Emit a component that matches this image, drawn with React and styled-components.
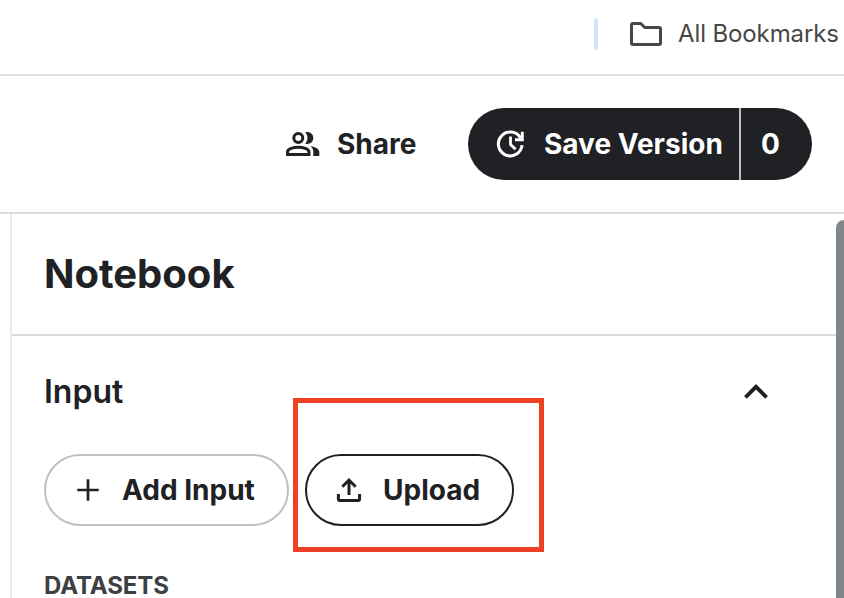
import React from "react";
import styled, { createGlobalStyle } from "styled-components";

const GlobalStyle = createGlobalStyle`
  *, *::before, *::after { box-sizing: border-box; }
  body { margin: 0; background: #fff; overflow: hidden; }
`;

const ink = "#202124";

const Page = styled.div`
  display: flex;
  flex-direction: column;
  width: 844px;
  height: 598px;
  overflow: hidden;
  background: #fff;
  color: ${ink};
  font-family: Inter, sans-serif;
`;

const BookmarksBar = styled.div`
  display: flex;
  align-items: center;
  flex: none;
  height: 76px;
  padding: 0 0 6px 594px;
  border-bottom: 2px solid #e0e0e0;
`;

const BarSeparator = styled.span`
  flex: none;
  width: 4px;
  height: 32px;
  border-radius: 2px;
  background: #d3e2fd;
  margin-right: 32px;
`;

const Header = styled.header`
  display: flex;
  align-items: center;
  flex: none;
  height: 138px;
  padding-left: 286px;
  border-bottom: 2px solid #dadce0;
`;

const Label = styled.span`
  display: block;
  white-space: nowrap;
  font-size: ${(p) => p.$size || 28}px;
  font-weight: ${(p) => p.$weight || 700};
  letter-spacing: ${(p) => p.$spacing || 0}px;
  line-height: ${(p) => p.$line || 36}px;
  color: ${(p) => p.$color || "inherit"};
  margin: 0 0 0 ${(p) => p.$gap || 0}px;
`;

const ShareButton = styled.button`
  display: flex;
  align-items: center;
  flex: none;
  width: 182px;
  height: 72px;
  padding: 0;
  border: 0;
  background: none;
  color: inherit;
  font-family: inherit;
`;

const SplitButton = styled.div`
  display: flex;
  flex: none;
  width: 344px;
  height: 72px;
  border-radius: 36px;
  overflow: hidden;
  background: ${ink};
  color: #fff;
`;

const SplitPart = styled.button`
  display: flex;
  align-items: center;
  flex: none;
  width: ${(p) => p.$width}px;
  padding: 0 0 0 ${(p) => p.$inset}px;
  border: 0;
  border-right: ${(p) => (p.$divided ? "2px solid #bdc1c6" : "0")};
  background: transparent;
  color: inherit;
  font-family: inherit;
`;

const Body = styled.div`
  display: flex;
  flex: 1;
  padding-left: 10px;
`;

const Panel = styled.aside`
  flex: none;
  width: 826px;
  border-left: 2px solid #e8eaed;
`;

const PanelTitle = styled.div`
  display: flex;
  align-items: center;
  height: 122px;
  padding-left: 32px;
  border-bottom: 2px solid #dadce0;
`;

const Section = styled.section`
  padding-left: 32px;
`;

const SectionHeader = styled.div`
  display: flex;
  align-items: center;
  justify-content: space-between;
  height: 118px;
  padding: 0 67px 6px 0;
`;

const Actions = styled.div`
  display: flex;
  gap: 16px;
  height: 72px;
`;

const PillButton = styled.button`
  display: flex;
  align-items: center;
  flex: none;
  width: ${(p) => p.$width}px;
  height: 72px;
  padding: 0 0 0 ${(p) => p.$inset}px;
  border: 2px solid ${(p) => p.$edge};
  border-radius: 36px;
  background: #fff;
  color: ${ink};
  font-family: inherit;
`;

const UploadSlot = styled.div`
  position: relative;
`;

const Highlight = styled.div`
  position: absolute;
  left: -12px;
  top: -56px;
  width: 251px;
  height: 154px;
  border: 5px solid #ee4023;
  pointer-events: none;
`;

const GroupHeading = styled.div`
  padding-top: 48px;
`;

const ScrollThumb = styled.div`
  flex: none;
  width: 8px;
  margin-top: 6px;
  border-radius: 8px 0 0 0;
  background: #80868b;
`;

const Icon = styled.svg`
  display: block;
  flex: none;
  overflow: visible;
`;

const FolderIcon = () => (
  <Icon width="32" height="24" viewBox="0 0 32 24" fill="none" stroke="#474747" strokeWidth="3" strokeLinejoin="round">
    <path d="M3 1.5H10.8L14.8 5.5H29Q30.5 5.5 30.5 7V21Q30.5 22.5 29 22.5H3Q1.5 22.5 1.5 21V3Q1.5 1.5 3 1.5Z" />
  </Icon>
);

const PeopleIcon = () => (
  <Icon width="34" height="24" viewBox="0 0 34 24" fill={ink}>
    <circle cx="12.3" cy="6" r="4.5" fill="none" stroke={ink} strokeWidth="3" />
    <path d="M1.5 22.5V20C1.5 17 7.5 15.2 12.3 15.2S23 17 23 20V22.5Z" fill="none" stroke={ink} strokeWidth="3" />
    <path d="M19.3 .3C23.5-.8 27.3 2 27.3 6S23.5 12.7 19.3 11.7C22.2 8.3 22.2 3.7 19.3 .3Z" />
    <path d="M24.5 14.2C29.5 14.8 33.3 17 33.3 20V24H27.3V20C27.3 17.5 26.3 15.7 24.5 14.2Z" />
  </Icon>
);

const VersionIcon = () => (
  <Icon width="28" height="28" viewBox="0 0 28 28" fill="none" stroke="#fff" strokeWidth="3">
    <path d="M25.1 15.2A11.9 11.9 0 1 1 23.6 8" />
    <path d="M25.3 1.8V9.7H18" strokeWidth="2.9" />
    <path d="M13.5 6.4V14.6L18.6 19.2" strokeWidth="2.8" />
  </Icon>
);

const PlusIcon = () => (
  <Icon width="22" height="22" viewBox="0 0 22 22" fill="none" stroke={ink} strokeWidth="2.7">
    <path d="M11 .3V21.7M.3 11H21.7" />
  </Icon>
);

const UploadIcon = () => (
  <Icon width="26" height="26" viewBox="0 0 26 26" fill="none" stroke={ink} strokeWidth="3">
    <path d="M13 18V3.5M6.3 9.7L13 3L19.7 9.7" />
    <path d="M2.4 17V22Q2.4 23.4 3.8 23.4H22.2Q23.6 23.4 23.6 22V17" />
  </Icon>
);

const ChevronIcon = () => (
  <Icon width="26" height="16" viewBox="0 0 26 16" fill="none" stroke={ink} strokeWidth="3.8">
    <path d="M2.4 13.4L13 2.8L23.6 13.4" />
  </Icon>
);

export default function App() {
  return (
    <Page>
      <GlobalStyle />
      <BookmarksBar>
        <BarSeparator />
        <FolderIcon />
        <Label $size={24} $weight={400} $gap={16} $spacing={-0.12} $color="#474747">All Bookmarks</Label>
      </BookmarksBar>
      <Header>
        <ShareButton>
          <PeopleIcon />
          <Label $gap={17}>Share</Label>
        </ShareButton>
        <SplitButton>
          <SplitPart $width={273} $inset={29} $divided>
            <VersionIcon />
            <Label $gap={19}>Save Version</Label>
          </SplitPart>
          <SplitPart $width={71} $inset={20}>
            <Label>0</Label>
          </SplitPart>
        </SplitButton>
      </Header>
      <Body>
        <Panel>
          <PanelTitle>
            <Label as="h1" $size={40}>Notebook</Label>
          </PanelTitle>
          <Section>
            <SectionHeader>
              <Label as="h2" $size={32} $weight={600}>Input</Label>
              <ChevronIcon />
            </SectionHeader>
            <Actions>
              <PillButton $width={245} $inset={31} $edge="#bdc1c6">
                <PlusIcon />
                <Label $gap={23}>Add Input</Label>
              </PillButton>
              <UploadSlot>
                <PillButton $width={209} $inset={29} $edge={ink}>
                  <UploadIcon />
                  <Label $gap={21}>Upload</Label>
                </PillButton>
                <Highlight />
              </UploadSlot>
            </Actions>
            <GroupHeading>
              <Label $size={24} $weight={700} $line={24} $spacing={-0.08} $color="#3c4043">DATASETS</Label>
            </GroupHeading>
          </Section>
        </Panel>
        <ScrollThumb />
      </Body>
    </Page>
  );
}
